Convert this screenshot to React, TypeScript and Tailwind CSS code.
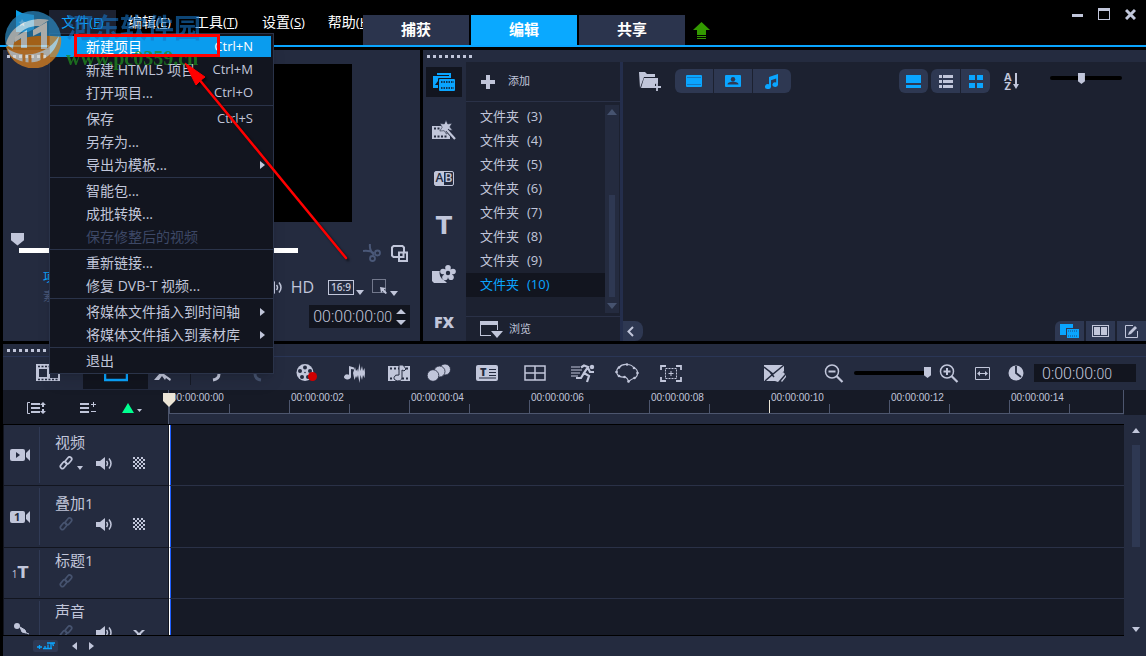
import { Fragment, ReactNode } from 'react';
import clsx from 'clsx';

interface IconProps {
    children: ReactNode;
    w: number;
    h: number;
    className?: string;
}

function Icon({ children, w, h, className }: IconProps) {
    return (
        <svg
            width={w}
            height={h}
            viewBox={`0 0 ${w} ${h}`}
            fill="currentColor"
            className={clsx('shrink-0', className)}
            aria-hidden="true"
        >
            {children}
        </svg>
    );
}

/* ---------- icons ---------- */

function CaretDown({ className }: { className?: string }) {
    return (
        <Icon w={8} h={5} className={className}>
            <path d="M0 0h8L4 5z" />
        </Icon>
    );
}

function ScrollArrow({ className }: { className?: string }) {
    return (
        <Icon w={10} h={6} className={className}>
            <path d="M0 0h10L5 6z" />
        </Icon>
    );
}

function CaretRight() {
    return (
        <Icon w={5} h={8}>
            <path d="M0 0l5 4-5 4z" />
        </Icon>
    );
}

function FilmIcon() {
    return (
        <Icon w={16} h={12}>
            <rect width="16" height="12" rx="1" />
            <path d="M1.500 2.500h13M1.500 9.500h13" stroke="#1f4a80" strokeWidth="1" strokeDasharray="1 1" />
        </Icon>
    );
}

function PhotoIcon() {
    return (
        <Icon w={16} h={12}>
            <rect width="16" height="12" rx="1" />
            <circle cx="8" cy="4.2" r="2.2" fill="#2e3852" />
            <path d="M2.5 9.5c0-2 2-2.5 5.500-3 3.500.5 5.500 1 5.500 3z" fill="#2e3852" />
        </Icon>
    );
}

function MusicIcon() {
    return (
        <Icon w={16} h={15}>
            <path d="M5 3l9-3v10.500a2.800 2.300 0 1 1-1.800-2V4.500L7 6.300v6.200a3 2.500 0 1 1-2-2.300z" />
        </Icon>
    );
}

function MediaIcon() {
    return (
        <Icon w={24} h={20}>
            <path d="M5 1h14v2H5z" />
            <path d="M1 4h4V2h14v5H6v9H1z" />
            <path d="M5 3.500h12" stroke="#12151f" />
            <path d="M3 13l3-4h1v4z" fill="#12151f" />
            <rect x="7" y="7" width="16" height="12" rx="1" />
            <path d="M6.500 18V6.500H19" stroke="#12151f" fill="none" />
            <path d="M9 10h13M9 16h13" stroke="#12151f" strokeWidth="1.500" strokeDasharray="1.500 1" />
        </Icon>
    );
}

function WandIcon() {
    return (
        <Icon w={24} h={20}>
            <path d="M0 6h12l6 7v6H0z" />
            <path d="M2 8.500h6M2 16.500h14" stroke="#242b3f" strokeWidth="2" strokeDasharray="2 1.500" />
            <path
                d="M14 0l1.800 4 4.200-.8-2.200 3.800 2.700 3.200-4.200.1-1.800 3.900-2.300-3.500-4.400.3 2.400-3.800L8 3.600l4.300.3z"
                stroke="#242b3f"
                strokeWidth="0.600"
            />
            <path d="M15 10l8 9" stroke="#242b3f" strokeWidth="4" />
            <path d="M14 9l9 10" stroke="currentColor" strokeWidth="2.200" />
        </Icon>
    );
}

function FlowerIcon() {
    return (
        <Icon w={24} h={19}>
            <path d="M0 6h11v8l4 4H2l-2-2z" />
            <circle cx="15.500" cy="8" r="8" fill="#242b3f" />
            <circle cx="16" cy="2.800" r="2.800" />
            <circle cx="21" cy="6.500" r="2.800" />
            <circle cx="19" cy="12.200" r="2.800" />
            <circle cx="13" cy="12.500" r="2.800" />
            <circle cx="11" cy="6.500" r="2.800" />
            <circle cx="16" cy="8" r="4.500" />
            <circle cx="16" cy="8" r="2.200" fill="#242b3f" />
        </Icon>
    );
}

function ReelIcon() {
    return (
        <Icon w={22} h={18}>
            <circle cx="9" cy="8.500" r="8.500" />
            <g fill="#242b3f">
                <circle cx="9" cy="3.500" r="2" />
                <circle cx="4" cy="7" r="2" />
                <circle cx="14" cy="7" r="2" />
                <circle cx="6" cy="13" r="2" />
                <circle cx="12" cy="13" r="2" />
                <circle cx="9" cy="8.500" r="0.800" />
            </g>
            <circle cx="16.500" cy="12.500" r="4.500" fill="#d00000" />
        </Icon>
    );
}

function WaveIcon() {
    return (
        <Icon w={22} h={20}>
            <path d="M5 3l5 1.500v2L7 6v8a3.500 2.500 0 1 1-2-2.300z" />
            <path d="M9 10l2-6 1 4 1.500-2 .5 3 1.500-9 1 8 1.500-5 1 5 1.500-3 .5 5-.5 5-1.500-3-1 5-1.500-5-1 8-1.500-8-1 3-1-2-1.500 4z" />
        </Icon>
    );
}

function FilmMusicIcon() {
    return (
        <Icon w={22} h={17}>
            <path d="M0 1h22v15H0z" />
            <path d="M2 3.500h18M2 13.500h18" stroke="#242b3f" strokeWidth="2" strokeDasharray="2 2" />
            <path d="M11 0h4l3 4-2 2-2-1v8a4 3 0 1 1-3-3z" stroke="#242b3f" strokeWidth="1" />
        </Icon>
    );
}

function CirclesIcon() {
    return (
        <Icon w={24} h={18}>
            <g stroke="#242b3f" strokeWidth="0.800">
                <circle cx="18" cy="5.500" r="5.500" />
                <circle cx="12.500" cy="7.500" r="5.500" />
                <circle cx="6" cy="11.500" r="5.800" />
            </g>
        </Icon>
    );
}

function SubtitleIcon() {
    return (
        <span className="relative h-4 w-[22px] shrink-0 rounded-xs bg-[#c1c6da]">
            <span className="absolute top-0 left-1 text-[11px] leading-[14px] font-extrabold text-[#242b3f]">T</span>
            <Icon w={22} h={16} className="absolute inset-0">
                <path d="M13 4.500h7M13 7.500h7M13 10.500h7M3 13h17" stroke="#242b3f" strokeWidth="1.200" />
            </Icon>
        </span>
    );
}

function GridIcon() {
    return (
        <Icon w={22} h={16}>
            <path d="M1 1h20v14H1zM11 1v14M1 8h20" fill="none" stroke="currentColor" strokeWidth="1.500" />
        </Icon>
    );
}

function RunnerIcon() {
    return (
        <Icon w={24} h={19}>
            <circle cx="21" cy="3" r="2.200" />
            <path
                d="M10 3.500l3-2 4 1.500-4 6 5 3-2 6M13 9l-3 5H5M17 4l2 4h4"
                fill="none"
                stroke="currentColor"
                strokeWidth="2.200"
            />
            <path d="M0 3h9M0 6h11M0 9h9M0 12h7" stroke="currentColor" strokeWidth="1" />
        </Icon>
    );
}

function MaskIcon() {
    return (
        <Icon w={24} h={20}>
            <path
                d="M4 4.500Q7 1 12 1.500q5 0 7 3.500 3.500 1 3.500 5t-3 5-6 3.500q-1-4-4-4.500-6 .5-7.500-3.500Q1 6 4 4.500z"
                fill="none"
                stroke="currentColor"
                strokeWidth="1.200"
            />
            {['4 4.5', '12 1.5', '19 5', '22.5 10', '19.5 15', '13.5 18.500', '9.5 14', '4 13', '1.5 9'].map((p) => (
                <circle key={p} cx={p.split(' ')[0]} cy={p.split(' ')[1]} r="1.300" />
            ))}
        </Icon>
    );
}

function TrackingIcon() {
    return (
        <Icon w={22} h={17}>
            <path
                d="M1 5V1h5M16 1h5v4M21 12v4h-5M6 16H1v-4"
                fill="none"
                stroke="currentColor"
                strokeWidth="1.800"
            />
            <path d="M5.500 3.500h11v10h-11z" fill="none" stroke="currentColor" strokeDasharray="2 1" />
            <path d="M11 6v5M8.500 8.500h5" stroke="currentColor" />
        </Icon>
    );
}

function ZoomIcon({ plus = false }: { plus?: boolean }) {
    return (
        <Icon w={20} h={19}>
            <circle cx="8" cy="7.500" r="6.500" fill="none" stroke="currentColor" strokeWidth="1.500" />
            <path d="M4.500 7.500h7" stroke="currentColor" strokeWidth="2" />
            {plus && <path d="M8 4v7" stroke="currentColor" strokeWidth="2" />}
            <path d="M12.500 12l6 6" stroke="currentColor" strokeWidth="2.200" />
        </Icon>
    );
}

function LinkIcon({ dim = false }: { dim?: boolean }) {
    return (
        <Icon w={14} h={14} className={dim ? 'text-[#46536f]' : ''}>
            <g fill="none" stroke="currentColor" strokeWidth="1.700">
                <rect x="-3.500" y="-2" width="7.500" height="4.200" rx="2.100" transform="translate(4.300 9.300) rotate(-50)" />
                <rect x="-3.500" y="-2" width="7.500" height="4.200" rx="2.100" transform="translate(9.300 4.500) rotate(-50)" />
            </g>
        </Icon>
    );
}

function SpeakerIcon() {
    return (
        <Icon w={17} h={13}>
            <path d="M0 4h4l5-4v13L4 9H0z" />
            <path d="M10.500 4q2 2.500 0 5M13 1.500q4 5 0 10" fill="none" stroke="currentColor" strokeWidth="1.500" />
        </Icon>
    );
}

function CheckerIcon() {
    return (
        <Icon w={12} h={12}>
            {[0, 1, 2, 3, 4, 5].map((row) => (
                <path
                    key={row}
                    d={`M${row % 2 ? 2 : 0} ${row * 2 + 1}H12`}
                    stroke="currentColor"
                    strokeWidth="2"
                    strokeDasharray="2 2"
                />
            ))}
        </Icon>
    );
}

function CameraIcon({ label }: { label?: string }) {
    return (
        <span className="relative">
            <Icon w={20} h={12}>
                <rect width="15" height="12" rx="2" />
                <path d="M16 4l4-4v12l-4-4z" />
                {!label && <path d="M6 3l4 3-4 3z" fill="#242b3f" />}
            </Icon>
            {label && (
                <span className="absolute top-0 left-1 text-[11px] leading-3 font-bold text-[#242b3f]">{label}</span>
            )}
        </span>
    );
}

function Dots() {
    return (
        <div className="flex h-3 items-center gap-[3px] px-1">
            {[0, 1, 2, 3, 4, 5, 6, 7].map((i) => (
                <span key={i} className="size-[3px] bg-[#c1c6da]" />
            ))}
        </div>
    );
}

/* ---------- header ---------- */

const menuBar = [
    { label: '文件', key: 'F' },
    { label: '编辑', key: 'E' },
    { label: '工具', key: 'T' },
    { label: '设置', key: 'S' },
    { label: '帮助', key: 'H' },
];

const tabs = ['捕获', '编辑', '共享'];

function Header() {
    return (
        <header className="flex h-[47px] shrink-0 items-end border-b-2 border-[#0aa5ff]">
            <div className="flex w-[363px] shrink-0 self-start overflow-hidden pt-2.5">
                <div className="w-[49px] shrink-0 pl-4">
                    <Icon w={18} h={22} className="text-[#0a9fe8]">
                        <path d="M0 0l6 3 12 2v14l-6 3H0z" />
                        <path d="M6 9l1.500 2.500L10 12l-2 1.500.5 3L6 15l-2 1.500.5-3L2.500 12 5 11.500z" fill="#e8f6ff" />
                    </Icon>
                </div>
                {menuBar.map((m, i) => (
                    <button
                        key={m.key}
                        className={clsx(
                            'h-6 w-[67px] shrink-0 text-sm whitespace-nowrap',
                            i === 0 ? 'bg-[#1c2130] text-[#0aa5ff]' : 'text-white',
                        )}
                    >
                        {m.label}
                        <span className="text-[13px]">
                            (<span className="underline">{m.key}</span>)
                        </span>
                    </button>
                ))}
            </div>
            <div className="flex gap-0.5">
                {tabs.map((t) => (
                    <button
                        key={t}
                        className={clsx(
                            'h-[30px] w-[106px] pb-0.5 text-[15px] font-bold text-white',
                            t === '编辑' ? 'bg-[#0aa9ff]' : 'bg-[#2b344d]',
                        )}
                    >
                        {t}
                    </button>
                ))}
            </div>
            <button className="ml-2 self-start pt-[22px] text-[#339900]" aria-label="更新">
                <Icon w={17} h={17}>
                    <path d="M8.500 0L17 8h-4v5H4V8H0zM4 14h9v1H4zM4 16h9v1H4z" />
                </Icon>
            </button>
            <div className="mr-2.5 ml-auto flex items-center gap-[15px] self-start pt-2 text-[#c1c6da]">
                <button aria-label="最小化">
                    <Icon w={11} h={12}>
                        <path d="M0 6h11v3H0z" />
                    </Icon>
                </button>
                <button aria-label="最大化">
                    <Icon w={12} h={12}>
                        <path d="M0 0h12v12H0zM1 3v8h10V3z" fillRule="evenodd" />
                    </Icon>
                </button>
                <button aria-label="关闭">
                    <Icon w={11} h={12}>
                        <path d="M1 2l9 9M10 2l-9 9" stroke="currentColor" strokeWidth="3" />
                    </Icon>
                </button>
            </div>
        </header>
    );
}

interface MenuEntry {
    label: string;
    shortcut?: string;
    submenu?: boolean;
    disabled?: boolean;
    active?: boolean;
}

const fileMenu: MenuEntry[][] = [
    [
        { label: '新建项目', shortcut: 'Ctrl+N', active: true },
        { label: '新建 HTML5 项目', shortcut: 'Ctrl+M' },
        { label: '打开项目...', shortcut: 'Ctrl+O' },
    ],
    [
        { label: '保存', shortcut: 'Ctrl+S' },
        { label: '另存为...' },
        { label: '导出为模板...', submenu: true },
    ],
    [{ label: '智能包...' }, { label: '成批转换...' }, { label: '保存修整后的视频', disabled: true }],
    [{ label: '重新链接...' }, { label: '修复 DVB-T 视频...' }],
    [
        { label: '将媒体文件插入到时间轴', submenu: true },
        { label: '将媒体文件插入到素材库', submenu: true },
    ],
    [{ label: '退出' }],
];

function FileMenu() {
    return (
        <div
            role="menu"
            className="absolute top-[33px] left-[49px] w-[225px] border border-[#2a3349] bg-[#12151f] py-px pr-0.5 text-[#c1c6da] shadow-lg"
        >
            {fileMenu.map((group, g) => (
                <Fragment key={g}>
                    {g > 0 && <div className="my-px -mr-0.5 h-px bg-[#2a3349]" />}
                    {group.map((item) => (
                        <button
                            key={item.label}
                            role="menuitem"
                            disabled={item.disabled}
                            className={clsx(
                                'flex h-[23px] w-full items-center border-y border-[#12151f] pr-1.5 pl-9 text-left text-sm whitespace-nowrap',
                                item.active && 'bg-[#0a9cee] text-white',
                                item.disabled && 'text-[#3d4866]',
                            )}
                        >
                            <span>{item.label}</span>
                            {item.shortcut && <span className="mr-3 ml-auto text-[13px]">{item.shortcut}</span>}
                            {item.submenu && (
                                <span className="ml-auto">
                                    <CaretRight />
                                </span>
                            )}
                        </button>
                    ))}
                </Fragment>
            ))}
        </div>
    );
}

/* ---------- preview ---------- */

function PreviewPanel() {
    return (
        <section className="w-[417px] shrink-0 bg-[#242b3f] text-[#c1c6da]">
            <Dots />
            <div className="mx-auto mt-0.5 h-[158px] w-[281px] bg-black" />
            <div className="mt-2.5 flex h-9 items-center pr-3 pl-2">
                <input
                    type="range"
                    min={0}
                    max={100}
                    defaultValue={0}
                    aria-label="播放位置"
                    className="h-9 w-[287px] appearance-none bg-transparent [&::-webkit-slider-runnable-track]:h-[5px] [&::-webkit-slider-runnable-track]:bg-[linear-gradient(to_right,transparent_8px,#fff_8px)] [&::-webkit-slider-thumb]:mt-[-15px] [&::-webkit-slider-thumb]:size-[13px] [&::-webkit-slider-thumb]:appearance-none [&::-webkit-slider-thumb]:bg-[#c1c6da] [&::-webkit-slider-thumb]:[clip-path:polygon(0_0,100%_0,100%_60%,50%_100%,0_60%)]"
                />
                <button className="mt-1.5 ml-auto text-[#4a5878]" aria-label="剪切">
                    <Icon w={18} h={18}>
                        <path
                            d="M7 0q-1 6 4 11M0 7q6-1 11 2"
                            fill="none"
                            stroke="currentColor"
                            strokeWidth="2"
                        />
                        <circle cx="14.500" cy="9" r="2.500" fill="none" stroke="currentColor" strokeWidth="1.800" />
                        <circle cx="9.500" cy="14.500" r="2.500" fill="none" stroke="currentColor" strokeWidth="1.800" />
                    </Icon>
                </button>
                <button className="mt-1.5 ml-2.5" aria-label="复制">
                    <Icon w={17} h={17}>
                        <path
                            d="M7 12H2.500L1 10.500V2.500L2.500 1h9L13 2.500V7M8 7.500h8V16H8zM9 12h3.500V8"
                            fill="none"
                            stroke="currentColor"
                            strokeWidth="2"
                        />
                    </Icon>
                </button>
            </div>
            <div className="flex justify-between pr-2.5 pb-[13px]">
                <div className="flex flex-col items-start pl-10 text-xs leading-[19px]">
                    <button className="text-[#0aa5ff]">项目</button>
                    <button className="text-[#4a5878]">素材</button>
                </div>
                <div className="flex flex-col items-end pt-2">
                    <div className="mr-3 flex h-[22px] items-center">
                        <button className="mr-2" aria-label="音量">
                            <SpeakerIcon />
                        </button>
                        <button className="mr-3.5 text-base font-medium">HD</button>
                        <button className="flex h-[15px] items-center border border-[#c1c6da] px-0.5 text-[10px] font-semibold">
                            16:9
                        </button>
                        <CaretDown className="mt-2.5 mr-2 ml-0.5" />
                        <button aria-label="选择">
                            <Icon w={16} h={16}>
                                <path d="M.5.5h13v13H.5z" fill="none" stroke="currentColor" strokeDasharray="1 1" />
                                <path d="M8 8l6 1-2 1.500 3 3.500-1.500 1-3-3L9 14z" />
                            </Icon>
                        </button>
                        <CaretDown className="mt-3 ml-0.5" />
                    </div>
                    <div className="mt-[7px] flex h-[23px] items-center gap-1 bg-[#12151f] px-1">
                        <p className="font-[Roboto,sans-serif] text-base font-light">
                            00:00:00:<span className="text-sm">00</span>
                        </p>
                        <button aria-label="时间码">
                            <Icon w={10} h={16}>
                                <path d="M0 5l5-5 5 5zM0 11h10l-5 5z" />
                            </Icon>
                        </button>
                    </div>
                </div>
            </div>
        </section>
    );
}

/* ---------- library ---------- */

const categories: { name: string; icon: ReactNode }[] = [
    { name: '媒体', icon: <MediaIcon /> },
    { name: '即时项目', icon: <WandIcon /> },
    {
        name: '转场',
        icon: (
            <span className="flex h-[15px] w-5 items-center rounded-xs border border-[#c1c6da] text-xs leading-none font-semibold">
                <span className="flex h-full w-1/2 items-center justify-center bg-[#c1c6da] text-[#242b3f]">A</span>
                <span className="flex w-1/2 justify-center">B</span>
            </span>
        ),
    },
    { name: '标题', icon: <span className="font-[DejaVu_Sans,sans-serif] text-2xl font-bold">T</span> },
    { name: '图形', icon: <FlowerIcon /> },
    { name: '滤镜', icon: <span className="text-base font-extrabold">FX</span> },
];

const folders = [3, 4, 5, 6, 7, 8, 9, 10];

function LibraryPanel() {
    return (
        <section className="flex min-w-0 flex-1 flex-col bg-[#242b3f] text-[#c1c6da]">
            <Dots />
            <div className="flex flex-1">
                <nav className="flex w-[43px] shrink-0 flex-col gap-[18px] px-[3px] pt-[5px]">
                    {categories.map((c, i) => (
                        <button
                            key={c.name}
                            aria-label={c.name}
                            className={clsx(
                                'flex h-[30px] w-9 items-center justify-center',
                                i === 0 && 'bg-[#12151f] text-[#0aa5ff]',
                            )}
                        >
                            {c.icon}
                        </button>
                    ))}
                </nav>

                <div className="flex w-[154px] shrink-0 flex-col bg-[#1c2130]">
                    <button className="flex h-10 items-center gap-[13px] border-b border-[#2a3147] pl-[15px] text-[11px]">
                        <Icon w={14} h={14}>
                            <path d="M5 0h4v5h5v4H9v5H5V9H0V5h5z" />
                        </Icon>
                        添加
                    </button>
                    <div className="flex flex-1 py-[3px]">
                        <ul className="flex-1 text-[13px]">
                            {folders.map((n) => (
                                <li key={n}>
                                    <button
                                        className={clsx(
                                            'flex h-6 w-full items-center gap-2 pl-3.5',
                                            n === 10 && 'bg-[#12151f] text-[#0aa5ff]',
                                        )}
                                    >
                                        文件夹 <span>({n})</span>
                                    </button>
                                </li>
                            ))}
                        </ul>
                        <div className="mr-px flex w-3.5 flex-col items-center bg-[#242b3f] py-1 text-[#46536f]">
                            <ScrollArrow className="rotate-180" />
                            <div className="mt-auto mb-1.5 h-[102px] w-1.5 bg-[#2e3852]" />
                            <ScrollArrow />
                        </div>
                    </div>
                    <button className="flex h-[25px] items-center gap-1.5 border-t border-[#2a3147] pl-3.5 text-[11px]">
                        <Icon w={23} h={17}>
                            <path d="M0 0h18v9h-1V4H1v10h10v1H0z" />
                            <path d="M11 10h12l-6 7z" />
                        </Icon>
                        浏览
                    </button>
                </div>

                <div className="flex min-w-0 flex-1 flex-col border-l-[3px] border-[#242e4c] bg-[#1c2130]">
                    <div className="flex items-center pt-[7px] pr-6 pl-4">
                        <button aria-label="导入媒体文件">
                            <Icon w={24} h={20}>
                                <path d="M0 1h6l2 2h8v3H5L1 17z" />
                                <path d="M5 7h14v5l-3 1v4H2z" />
                                <path d="M18 12v8M14 16h8" stroke="currentColor" strokeWidth="1.800" />
                            </Icon>
                        </button>
                        <div className="ml-3 flex gap-px overflow-hidden rounded-md text-[#0aa5ff]">
                            {[
                                { name: '视频', icon: <FilmIcon /> },
                                { name: '照片', icon: <PhotoIcon /> },
                                { name: '音乐', icon: <MusicIcon /> },
                            ].map((b) => (
                                <button
                                    key={b.name}
                                    aria-label={b.name}
                                    className="flex h-6 w-[38px] items-center justify-center bg-[#2e3852]"
                                >
                                    {b.icon}
                                </button>
                            ))}
                        </div>
                        <button
                            aria-label="大图标"
                            className="ml-auto flex h-6 w-[29px] items-center justify-center rounded-md bg-[#2e3852] text-[#0aa5ff]"
                        >
                            <Icon w={15} h={13}>
                                <path d="M0 0h15v8H0zM0 10h15v3H0z" />
                            </Icon>
                        </button>
                        <div className="ml-[3px] flex gap-px overflow-hidden rounded-md">
                            <button
                                aria-label="列表"
                                className="flex h-6 w-[29px] items-center justify-center bg-[#2e3852]"
                            >
                                <Icon w={14} h={13}>
                                    <path d="M0 0h3v3H0zM4 0h10v3H4zM0 5h3v3H0zM4 5h10v3H4zM0 10h3v3H0zM4 10h10v3H4z" />
                                </Icon>
                            </button>
                            <button
                                aria-label="缩略图"
                                className="flex h-6 w-[29px] items-center justify-center bg-[#2e3852] text-[#0aa5ff]"
                            >
                                <Icon w={14} h={13}>
                                    <path d="M0 0h6v5H0zM8 0h6v5H8zM0 8h6v5H0zM8 8h6v5H8z" />
                                </Icon>
                            </button>
                        </div>
                        <button
                            className="ml-3.5 flex w-[15px] items-center justify-between text-[11px] leading-[9px] font-bold"
                            aria-label="排序"
                        >
                            <span className="flex flex-col">
                                <span>A</span>
                                <span>Z</span>
                            </span>
                            <Icon w={6} h={16}>
                                <path d="M2 0h2v11h2l-3 5-3-5h2z" />
                            </Icon>
                        </button>
                        <input
                            type="range"
                            min={0}
                            max={100}
                            defaultValue={43}
                            aria-label="缩略图大小"
                            className="ml-[31px] h-[18px] w-[72px] appearance-none self-start bg-transparent [&::-webkit-slider-runnable-track]:h-1 [&::-webkit-slider-runnable-track]:rounded-full [&::-webkit-slider-runnable-track]:bg-black [&::-webkit-slider-thumb]:mt-[-3px] [&::-webkit-slider-thumb]:h-[11px] [&::-webkit-slider-thumb]:w-[7px] [&::-webkit-slider-thumb]:appearance-none [&::-webkit-slider-thumb]:bg-[#c1c6da] [&::-webkit-slider-thumb]:[clip-path:polygon(0_0,100%_0,100%_75%,50%_100%,0_75%)]"
                        />
                    </div>
                    <div className="mt-auto flex items-end justify-between">
                        <button
                            aria-label="收起"
                            className="flex h-5 w-5 items-center rounded-r-lg bg-[#2e3852] pl-1"
                        >
                            <Icon w={7} h={11}>
                                <path d="M6 1L1.500 5.500 6 10" fill="none" stroke="currentColor" strokeWidth="2" />
                            </Icon>
                        </button>
                        <div className="flex gap-0.5">
                            <button
                                aria-label="显示库"
                                className="flex h-5 w-[29px] items-center justify-center rounded-tl-md bg-[#2e3852] text-[#0aa5ff]"
                            >
                                <Icon w={19} h={14}>
                                    <path d="M0 0h13v4H6v7H0z" />
                                    <path d="M7 5h12v9H7z" />
                                    <path d="M8 7h10M8 12h10" stroke="#1f4a80" strokeDasharray="1 1" />
                                </Icon>
                            </button>
                            <button
                                aria-label="显示库和选项"
                                className="flex h-5 w-[29px] items-center justify-center bg-[#2e3852]"
                            >
                                <Icon w={17} h={12}>
                                    <path d="M0 0h17v12H0zM1 1v10h15V1z" fillRule="evenodd" />
                                    <path d="M2 2h6v8H2zM9 2h6v8H9z" />
                                </Icon>
                            </button>
                            <button
                                aria-label="选项"
                                className="flex h-5 w-[29px] items-center justify-center bg-[#2e3852]"
                            >
                                <Icon w={13} h={13}>
                                    <path d="M8 .5H.5v12h12V6" fill="none" stroke="currentColor" />
                                    <path d="M10 1l2 2-6 6-3 1 1-3z" />
                                </Icon>
                            </button>
                        </div>
                    </div>
                </div>
            </div>
        </section>
    );
}

/* ---------- timeline ---------- */

const tools: { name: string; icon: ReactNode; gap: string }[] = [
    { name: '录制/捕获选项', icon: <ReelIcon />, gap: '' },
    { name: '混音器', icon: <WaveIcon />, gap: 'ml-6' },
    { name: '自动音乐', icon: <FilmMusicIcon />, gap: 'ml-5' },
    { name: '转场', icon: <CirclesIcon />, gap: 'ml-4' },
    { name: '字幕编辑器', icon: <SubtitleIcon />, gap: 'ml-6' },
    { name: '多相机编辑器', icon: <GridIcon />, gap: 'ml-6' },
    { name: '时间重新映射', icon: <RunnerIcon />, gap: 'ml-6' },
    { name: '遮罩创建器', icon: <MaskIcon />, gap: 'ml-5' },
    { name: '动态追踪', icon: <TrackingIcon />, gap: 'ml-5' },
];

function TimelineToolbar() {
    return (
        <div className="flex h-[33px] shrink-0 items-center pr-2.5 pb-px">
            <button className="ml-[33px] w-6" aria-label="故事板视图">
                <Icon w={24} h={18}>
                    <path d="M0 0h14v6h10v11H0zM3 5v8h8V5zM14 9v5h8V9z" fillRule="evenodd" />
                    <path d="M2 2.500h11M2 15.500h20" stroke="#242b3f" strokeWidth="1.500" strokeDasharray="2 1.500" />
                </Icon>
            </button>
            <button
                className="ml-[23px] flex h-[31px] w-[65px] items-center justify-center bg-[#12151f] text-[#0aa5ff]"
                aria-label="时间轴视图"
            >
                <Icon w={24} h={18}>
                    <path d="M1 1h22v15H1z" fill="none" stroke="currentColor" strokeWidth="2.500" />
                </Icon>
            </button>
            <button className="ml-1.5 w-[18px]" aria-label="自定义工具栏">
                <Icon w={18} h={18}>
                    <path d="M0 16l6-7 6-7 3 3-5 5 7 5-1 2-4-3-1 2-3-4-3 4z" />
                </Icon>
            </button>
            <span className="ml-[18px] h-6 w-px bg-[#161a26]" />
            <button className="ml-4 w-4" aria-label="撤消">
                <Icon w={16} h={18}>
                    <path d="M3 4q10-1 9 6 0 5-6 6" fill="none" stroke="currentColor" strokeWidth="3" />
                </Icon>
            </button>
            <button className="ml-7 w-4 text-[#46536f]" aria-label="重复">
                <Icon w={16} h={18}>
                    <path d="M13 4Q3 3 4 10q0 5 6 6" fill="none" stroke="currentColor" strokeWidth="3" />
                </Icon>
            </button>
            <div className="ml-7 flex items-center">
                {tools.map((t) => (
                    <button
                        key={t.name}
                        aria-label={t.name}
                        className={clsx('flex h-6 w-6 items-center justify-center', t.gap)}
                    >
                        {t.icon}
                    </button>
                ))}
            </div>
            <div className="ml-auto flex items-center">
                <button className="mr-[38px]" aria-label="智能代理">
                    <Icon w={22} h={18}>
                        <path d="M0 1h20v6l-8 10H0z" />
                        <path d="M0 3l9 7L20 1M9 10l-8 7M6 8l4 5" fill="none" stroke="#242b3f" strokeWidth="1.500" />
                        <path d="M11 17l8-9 2 2-7 8zM17 17l5-6v2l-4 5z" />
                    </Icon>
                </button>
                <button aria-label="缩小">
                    <ZoomIcon />
                </button>
                <input
                    type="range"
                    min={0}
                    max={100}
                    defaultValue={100}
                    aria-label="缩放"
                    className="mr-2 ml-2.5 h-6 w-[77px] appearance-none bg-transparent [&::-webkit-slider-runnable-track]:h-1 [&::-webkit-slider-runnable-track]:rounded-full [&::-webkit-slider-runnable-track]:bg-black [&::-webkit-slider-thumb]:mt-[-4px] [&::-webkit-slider-thumb]:h-[11px] [&::-webkit-slider-thumb]:w-[7px] [&::-webkit-slider-thumb]:appearance-none [&::-webkit-slider-thumb]:bg-[#c1c6da] [&::-webkit-slider-thumb]:[clip-path:polygon(0_0,100%_0,100%_75%,50%_100%,0_75%)]"
                />
                <button aria-label="放大">
                    <ZoomIcon plus />
                </button>
                <button className="mr-[18px] ml-4" aria-label="将项目调到时间轴窗口大小">
                    <Icon w={15} h={13}>
                        <path d="M.5.5h14v12H.5z" fill="none" stroke="currentColor" />
                        <path d="M2 6.500L5 4v2h5V4l3 2.500L10 9V7H5v2z" />
                    </Icon>
                </button>
                <Icon w={16} h={16} className="mr-2.5">
                    <circle cx="8" cy="8" r="7.500" />
                    <path d="M8 1v7l5 4" fill="none" stroke="#242b3f" strokeWidth="1.800" />
                </Icon>
                <p className="h-[18px] w-[102px] bg-[#12151f] pl-2 font-[Roboto,sans-serif] text-base leading-[18px] font-light">
                    0:00:00:<span className="text-sm">00</span>
                </p>
            </div>
        </div>
    );
}

const marks = ['00', '02', '04', '06', '08', '10', '12', '14'];

function Ruler() {
    return (
        <div className="flex h-[34px] shrink-0 bg-[#161a26]">
            <div className="relative flex w-[166px] shrink-0 items-center border-r border-[#4d566e] pt-0.5 pl-6">
                <button aria-label="显示全部轨道">
                    <Icon w={19} h={12}>
                        <path d="M3 .5H.5v11H3" fill="none" stroke="currentColor" />
                        <path d="M4 1h9v2H4zM4 5h9v2H4zM4 9h9v2H4zM16 0l3 3h-2v2h-2V3h-2zM16 12l3-3h-2V7h-2v2h-2z" />
                    </Icon>
                </button>
                <button className="ml-[34px]" aria-label="轨道管理器">
                    <Icon w={16} h={12}>
                        <path d="M0 1h9v2H0zM0 5h9v2H0zM0 9h9v2H0zM11 2h2V0h1v2h2v1h-2v2h-1V3h-2zM11 9h5v1h-5z" />
                    </Icon>
                </button>
                <button className="ml-[26px] flex items-end gap-[3px]" aria-label="添加章节点">
                    <Icon w={12} h={10} className="text-[#00ff90]">
                        <path d="M6 0l6 10H0z" />
                    </Icon>
                    <Icon w={5} h={4}>
                        <path d="M0 0h5L2.500 3z" />
                    </Icon>
                </button>
                <Icon w={12} h={14} className="absolute top-[3px] -right-[7px] text-[#ece5d6]">
                    <path d="M0 0h12v8l-6 6-6-6z" />
                </Icon>
            </div>
            <div className="flex min-w-0 flex-1 flex-col bg-[#242b3f]">
                <div className="flex h-6 overflow-hidden border-r border-b border-[#4d566e] bg-[#161a26]">
                    {marks.map((m) => (
                        <div key={m} className="w-[120px] shrink-0">
                            <p className="h-2.5 pt-0.5 pl-0.5 font-[Liberation_Sans,sans-serif] text-[10px] leading-3">
                                00:00:00:{m}
                            </p>
                            <div className="flex items-end">
                                <span
                                    className={clsx(
                                        'h-[13px] w-[60px] border-l',
                                        m === '10' ? 'border-[#ece5d6]' : 'border-[#4d566e]',
                                    )}
                                />
                                <span className="h-[9px] w-[60px] border-l border-[#4d566e]" />
                            </div>
                        </div>
                    ))}
                </div>
            </div>
            <div className="w-[22px] shrink-0 border-b-[9px] border-[#242b3f]" />
        </div>
    );
}

interface TrackProps {
    name: string;
    icon: ReactNode;
    height: string;
    compact?: boolean;
    linked?: boolean;
    extra?: ReactNode;
}

const tracks: TrackProps[] = [
    { name: '视频', icon: <CameraIcon />, height: 'h-[61px]', linked: true, extra: <CheckerIcon /> },
    { name: '叠加1', icon: <CameraIcon label="1" />, height: 'h-[62px]', extra: <CheckerIcon /> },
    {
        name: '标题1',
        icon: (
            <span className="flex items-end text-[10px] leading-3">
                1<span className="font-[DejaVu_Sans,sans-serif] text-base leading-3.5 font-bold">T</span>
            </span>
        ),
        height: 'h-[51px]',
        compact: true,
    },
    {
        name: '声音',
        icon: (
            <Icon w={16} h={12} className="ml-1">
                <circle cx="3" cy="3" r="3" />
                <path d="M6 4l5 3 1 3-4-1zM10 9l5 2" stroke="currentColor" strokeWidth="1" />
            </Icon>
        ),
        height: 'h-[61px]',
        compact: true,
        extra: (
            <Icon w={12} h={12}>
                <path d="M0 4h3l3 3 3-3h3l-4 4v4H4V8z" />
            </Icon>
        ),
    },
];

function Track({ name, icon, height, compact, linked, extra }: TrackProps) {
    return (
        <div className={clsx('flex shrink-0', height)}>
            <div className="flex w-[166px] shrink-0 border-x border-b border-[#12151f] bg-[#242b3f]">
                <div className="my-0.5 flex w-9 items-center justify-center border-r border-[#303a55] pr-[3px]">
                    {icon}
                </div>
                <div className={clsx('pl-[15px]', compact ? 'pt-[3px]' : 'pt-2')}>
                    <p className="text-[15px] leading-[18px]">{name}</p>
                    <div className="mt-[3px] flex h-[18px] items-center pl-1">
                        <button aria-label={`链接 ${name}`}>
                            <LinkIcon dim={!linked} />
                        </button>
                        <span className="flex w-[23px] pt-2.5 pl-1">
                            {linked && (
                                <Icon w={6} h={4}>
                                    <path d="M0 0h6L3 4z" />
                                </Icon>
                            )}
                        </span>
                        {extra && (
                            <>
                                <button className="mr-5" aria-label={`静音 ${name}`}>
                                    <SpeakerIcon />
                                </button>
                                <button aria-label={`显示 ${name}`}>{extra}</button>
                            </>
                        )}
                    </div>
                </div>
            </div>
            <div className="flex-1 border-b border-l border-b-[#2a3147] border-l-white bg-[#161a26]">
                <div className="h-full w-px bg-[#1f5fff]" />
            </div>
        </div>
    );
}

function Timeline() {
    return (
        <section className="mt-[3px] ml-[3px] flex min-h-0 flex-1 flex-col bg-[#242b3f] text-[#c1c6da]">
            <div className="h-[13px] shrink-0 border-b border-[#2a3656]">
                <Dots />
            </div>
            <TimelineToolbar />
            <Ruler />
            <div className="flex min-h-0 flex-1">
                <div className="flex flex-1 flex-col overflow-hidden border-y border-black">
                    {tracks.map((t) => (
                        <Track key={t.name} {...t} />
                    ))}
                </div>
                <div className="flex w-[22px] shrink-0 flex-col items-center py-1 pl-0.5">
                    <CaretDown className="rotate-180" />
                    <div className="mt-3 h-[102px] w-2 bg-[#2e3852]" />
                    <CaretDown className="mt-auto" />
                </div>
            </div>
            <div className="flex h-5 shrink-0 items-center pl-[30px]">
                <button
                    className="flex h-3 w-[25px] items-center justify-center rounded-xs bg-[#2e3852] text-[#0aa5ff]"
                    aria-label="自动滚动时间轴"
                >
                    <Icon w={18} h={8}>
                        <path
                            d="M0 5h5M2.500 3v4M6 6.500h9M8 6V4M11 6V2.500M14 6V1M10 1h8M15.500 1l1 3"
                            fill="none"
                            stroke="currentColor"
                            strokeWidth="1.300"
                        />
                    </Icon>
                </button>
                <button className="ml-3.5 rotate-180" aria-label="向左滚动">
                    <CaretRight />
                </button>
                <button className="ml-3" aria-label="向右滚动">
                    <CaretRight />
                </button>
            </div>
        </section>
    );
}

/* ---------- overlays ---------- */

function Watermark() {
    return (
        <div className="pointer-events-none absolute top-2.5 left-1 flex items-start gap-1 opacity-75">
            <Icon w={58} h={58}>
                <circle cx="29" cy="29" r="28" fill="#2b86bd" />
                <path d="M2 37Q20 22 57 27A28 28 0 0 1 2 37z" fill="#d9801f" />
                <path d="M2 34C6 16 26 6 45 10L36 16C22 15 10 24 9 39z" fill="#d6dcdc" />
                <path d="M11 27l12-7v18h-6V28l-6 4zM29 20l14-8v27h-6V22l-8 4z" fill="#e4e4e0" />
                <path d="M3 38c12 10 38 10 52-12-3 24-30 34-48 20z" fill="#d8d8cf" />
                <path d="M20 44v12M26 45v13M38 43v12" stroke="#d9801f" strokeWidth="3" />
            </Icon>
            <div className="whitespace-nowrap">
                <p className="text-[27px] leading-9 font-bold text-[#1673c4]/80">河东软件园</p>
                <p className="font-[Liberation_Serif,serif] text-xl leading-6 font-bold text-[#1f8a1f]">
                    www.pc0359.cn
                </p>
            </div>
        </div>
    );
}

function Callout() {
    return (
        <div className="pointer-events-none absolute top-[34px] left-[74px]">
            <div className="h-[23px] w-[146px] border-3 border-[#ff0000]" />
            <svg
                width="180"
                height="210"
                viewBox="0 0 180 210"
                className="absolute top-[26px] left-[106px] drop-shadow-[2px_2px_1px_rgba(0,0,0,0.6)]"
                aria-hidden="true"
            >
                <path d="M18 18L166 198" stroke="#ff0000" strokeWidth="2.500" strokeLinecap="round" />
                <path d="M5 3l20 14-4 3-5 5z" fill="#ff0000" stroke="#ff0000" strokeWidth="1" />
            </svg>
        </div>
    );
}

export default function App() {
    return (
        <div className="relative flex h-screen flex-col overflow-hidden bg-black font-[Open_Sans,Noto_Sans_CJK_SC,sans-serif]">
            <Header />
            <div className="mt-[3px] ml-[3px] flex shrink-0 gap-[3px]">
                <PreviewPanel />
                <LibraryPanel />
            </div>
            <Timeline />
            <FileMenu />
            <Watermark />
            <Callout />
        </div>
    );
}
